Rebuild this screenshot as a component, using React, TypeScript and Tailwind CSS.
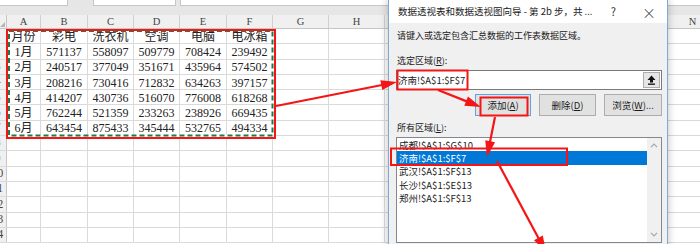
const COL_W = [
  "w-[34px]", "w-[47px]", "w-[46px]", "w-[46px]", "w-[47px]", "w-[46px]",
  "w-[56px]", "w-[56px]", "w-[56px]", "w-[56px]", "w-[56px]", "w-[56px]", "w-[56px]", "w-[56px]",
];
const LETTERS = ["A", "B", "C", "D", "E", "F", "G", "H", "I", "J", "K", "L", "M", "N"];

const DATA = [
  ["月份", "彩电", "洗衣机", "空调", "电脑", "电冰箱"],
  ["1月", "571137", "558097", "509779", "708424", "239492"],
  ["2月", "240517", "377049", "351671", "435964", "574502"],
  ["3月", "208216", "730416", "712832", "634263", "397157"],
  ["4月", "414207", "430736", "516070", "776008", "618268"],
  ["5月", "762244", "521359", "233263", "238926", "669435"],
  ["6月", "643454", "875433", "345444", "532765", "494334"],
];

const RANGES = [
  "成都!$A$1:$G$10",
  "济南!$A$1:$F$7",
  "武汉!$A$1:$F$13",
  "长沙!$A$1:$E$13",
  "郑州!$A$1:$F$13",
];

const RED = "#f41616";

function Arrow({ x1, y1, x2, y2 }: { x1: number; y1: number; x2: number; y2: number }) {
  const dx = x2 - x1;
  const dy = y2 - y1;
  const len = Math.hypot(dx, dy);
  const ux = dx / len;
  const uy = dy / len;
  const headLen = 16;
  const half = 5;
  const bx = x2 - ux * headLen;
  const by = y2 - uy * headLen;
  const pts = `${x2},${y2} ${bx - uy * half},${by + ux * half} ${bx + uy * half},${by - ux * half}`;
  return (
    <g>
      <line x1={x1} y1={y1} x2={bx + ux * 2} y2={by + uy * 2} stroke={RED} strokeWidth={2.2} />
      <polygon points={pts} fill={RED} />
    </g>
  );
}

function Sheet() {
  const rows = Array.from({ length: 14 }, (_, i) => i + 1);
  return (
    <div className="flex flex-col w-[700px] h-[244px] overflow-hidden bg-white font-['Liberation_Serif','Noto_Sans_CJK_SC',serif] text-[#222]">
      {/* formula bar remains */}
      <div className="flex h-[15px] shrink-0 bg-[#e6e6e6]">
        <div className="w-[68px] h-[6px] bg-white border-b border-r border-[#c6c6c6]" />
        <div className="ml-[25px] w-[83px] h-[6px] bg-white border-b border-x border-[#c6c6c6]" />
        <div className="ml-[4px] flex-1 h-[6px] bg-white border-b border-l border-[#c6c6c6]" />
      </div>
      {/* column headers */}
      <div className="flex h-[14px] shrink-0 bg-[#f0f0f0] border-b border-[#c6c6c6]">
        <div className="w-[7px] shrink-0 border-r border-[#c6c6c6] flex items-end justify-end">
          <div className="w-0 h-0 border-l-[5px] border-l-transparent border-b-[5px] border-b-[#b5b5b5] mr-[1px] mb-[1px]" />
        </div>
        {LETTERS.map((l, i) => (
          <div
            key={l}
            className={`${COL_W[i]} shrink-0 border-r border-[#d0d0d0] flex items-center justify-center text-[10.5px] text-[#444]`}
          >
            {l}
          </div>
        ))}
      </div>
      {rows.map((r) => {
        const cells = DATA[r - 1];
        return (
          <div key={r} className="flex h-[15.3px] shrink-0 border-b border-[#dadada]">
            <div className="w-[7px] shrink-0 bg-[#f0f0f0] border-r border-[#c6c6c6] overflow-hidden flex justify-end items-center">
              <div className="w-[17px] shrink-0 text-center text-[11.5px] leading-none text-[#444]">{r}</div>
            </div>
            {LETTERS.map((l, i) => (
              <div
                key={l}
                className={`${COL_W[i]} shrink-0 border-r border-[#dadada] flex items-center justify-center pt-[1px] text-[12px] leading-none whitespace-nowrap`}
              >
                {cells && cells[i] ? cells[i] : ""}
              </div>
            ))}
          </div>
        );
      })}
    </div>
  );
}

function Btn({ label, keyChar, tail, focused }: { label: string; keyChar: string; tail?: string; focused?: boolean }) {
  return (
    <div
      className={`h-[22px] flex items-center justify-center bg-[#e1e1e1] text-[9.5px] border ${
        focused ? "border-[#5aa5e8]" : "border-[#adadad]"
      }`}
    >
      {label}(<span className="underline">{keyChar}</span>){tail}
    </div>
  );
}

function Dialog() {
  return (
    <div className="absolute left-[388px] top-[-1px] w-[280px] h-[262px] border border-[#7fa9d6] bg-[#f0f0f0] shadow-[0_0_8px_rgba(0,0,0,0.25)] flex flex-col font-['Noto_Sans_CJK_SC',sans-serif] text-[#1a1a1a]">
      <div className="h-[23px] shrink-0 bg-white flex items-center pl-[9px]">
        <span className="text-[9.5px] whitespace-nowrap">数据透视表和数据透视图向导 - 第 2b 步，共 ...</span>
        <span className="ml-auto text-[11px] text-[#333]">?</span>
        <span className="ml-[26px] mr-[11px] text-[14px] leading-none text-[#333] font-light">×</span>
      </div>
      <div className="flex flex-col pl-[7px] pr-[5px]">
        <div className="h-[26px] flex items-center pl-[1px] text-[9px] whitespace-nowrap">
          请键入或选定包含汇总数据的工作表数据区域。
        </div>
        <div className="mt-[5px] h-[14px] flex items-center pl-[1px] text-[9px]">
          选定区域(<span className="underline">R</span>):
        </div>
        <div className="mt-[2px] h-[20px] bg-white border border-[#7a7a7a] flex items-center">
          <span className="pl-[1px] text-[9.5px] whitespace-nowrap">济南!$A$1:$F$7</span>
          <div className="ml-auto mr-[1px] w-[17px] h-[16px] bg-[#e6e6e6] border border-[#adadad] flex items-center justify-center">
            <svg width="9" height="10" viewBox="0 0 9 10">
              <path d="M4.5 0.5 L8.5 5 H6 V7.5 H3 V5 H0.5 Z" fill="#111" />
              <rect x="1" y="8.5" width="7" height="1.3" fill="#111" />
            </svg>
          </div>
        </div>
        <div className="mt-[4px] flex justify-end gap-[8px]">
          <div className="w-[56px]">
            <Btn label="添加" keyChar="A" focused />
          </div>
          <div className="w-[57px]">
            <Btn label="删除" keyChar="D" />
          </div>
          <div className="w-[58px]">
            <Btn label="浏览" keyChar="W" tail="..." />
          </div>
        </div>
        <div className="mt-[5px] h-[14px] flex items-center pl-[1px] text-[9px]">
          所有区域(<span className="underline">L</span>):
        </div>
        <div className="mt-[2px] h-[106px] bg-white border border-[#828790] flex">
          <div className="flex-1 flex flex-col">
            {RANGES.map((r, i) => (
              <div
                key={r}
                className={`h-[13.4px] flex items-center pl-[2px] text-[9.5px] whitespace-nowrap ${
                  i === 1 ? "bg-[#0078d7] text-white" : ""
                }`}
              >
                {r}
              </div>
            ))}
          </div>
          <div className="w-[14px] bg-[#f0f0f0] flex flex-col items-center justify-between py-[5px]">
            <svg width="8" height="5" viewBox="0 0 8 5">
              <path d="M1 4.2 L4 1.2 L7 4.2" fill="none" stroke="#a6a6a6" strokeWidth="1.2" />
            </svg>
            <svg width="8" height="5" viewBox="0 0 8 5">
              <path d="M1 0.8 L4 3.8 L7 0.8" fill="none" stroke="#a6a6a6" strokeWidth="1.2" />
            </svg>
          </div>
        </div>
      </div>
    </div>
  );
}

function Annotations() {
  return (
    <svg className="absolute left-0 top-0 pointer-events-none" width="700" height="244" viewBox="0 0 700 244">
      <rect x="9" y="31" width="263.5" height="104.5" fill="none" stroke="#ffffff" strokeWidth="2" />
      <rect x="9" y="31" width="263.5" height="104.5" fill="none" stroke="#1f7a46" strokeWidth="2" strokeDasharray="5 3" />
      <rect x="7" y="30" width="268" height="108" fill="none" stroke={RED} strokeWidth="2" />
      <rect x="397.5" y="70.5" width="70" height="19" fill="none" stroke={RED} strokeWidth="2" />
      <rect x="480.5" y="97.5" width="47" height="18" fill="none" stroke={RED} strokeWidth="2" />
      <rect x="391" y="148.5" width="176" height="16.5" fill="none" stroke={RED} strokeWidth="2" />
      <Arrow x1={276} y1={106} x2={397} y2={82} />
      <Arrow x1={438} y1={90} x2={481} y2={107} />
      <Arrow x1={495} y1={117} x2={487} y2={157} />
      <Arrow x1={497} y1={161} x2={546} y2={252} />
    </svg>
  );
}

export default function App() {
  return (
    <div className="relative w-[700px] h-[244px] overflow-hidden">
      <Sheet />
      <Dialog />
      <Annotations />
    </div>
  );
}
